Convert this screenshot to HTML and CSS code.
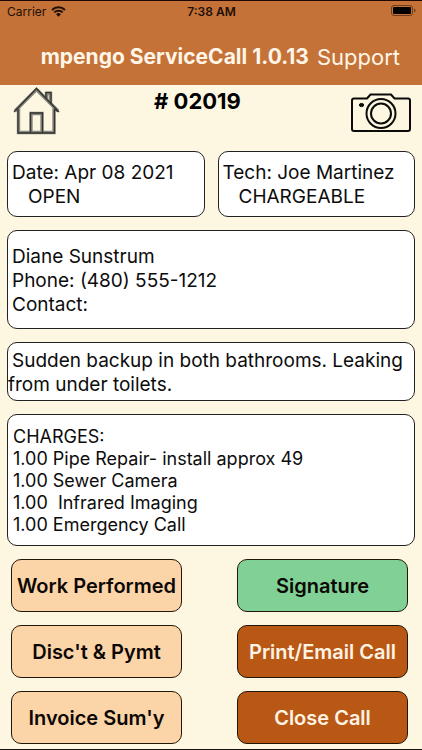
FILE: index.html
```html
<!DOCTYPE html>
<html lang="en">
<head>
<meta charset="utf-8">
<meta name="viewport" content="width=device-width, initial-scale=1">
<title>mpengo ServiceCall</title>
<link rel="stylesheet" href="styles.css">
</head>
<body>
<div class="app">
  <header class="header">
    <div class="status">
      <div class="status-carrier">
        <span>Carrier</span>
        <svg class="wifi" viewBox="0 0 15 11" aria-hidden="true">
          <path d="M1 4a9.2 9.2 0 0 1 13 0M3.3 6.4a6 6 0 0 1 8.4 0" fill="none" stroke="currentColor" stroke-width="2"/>
          <path d="M5.1 8.2a3.4 3.4 0 0 1 4.8 0L7.5 10.8z" fill="currentColor"/>
        </svg>
      </div>
      <span class="status-time">7:38 AM</span>
      <svg class="battery" viewBox="0 0 25 12" aria-hidden="true">
        <rect x="0.5" y="0.5" width="21" height="10" rx="2.5" fill="none" stroke="#6f3d1c"/>
        <rect x="2" y="2" width="18" height="7" rx="1" fill="#000"/>
        <path d="M23 3.6q1.500.4 1.500 1.900t-1.500 1.900z" fill="#6f3d1c"/>
      </svg>
    </div>
    <nav class="navbar">
      <h1 class="title">mpengo ServiceCall 1.0.13</h1>
      <a class="support" href="#support">Support</a>
    </nav>
  </header>
  <main class="main">
    <div class="toolbar">
      <button class="icon-button" type="button" aria-label="Home">
        <svg class="home" viewBox="0 0 48 48" fill="none" aria-hidden="true">
          <g stroke="#888880" stroke-width="3.400">
            <path d="M6.500 21V45.500H42V21M19 45V26.500H30V45M34.500 12V6.500H38.500V17"/>
            <path d="M3 24L24.500 2.500L46 24"/>
          </g>
          <g stroke="#33332f" stroke-width="1.300">
            <path d="M6 22V46H42.500V22M18.500 46V26H30.500V46M34 11V5.500H39V17"/>
            <path d="M2 25L24.500 1.500L47 25L43 22.500"/>
          </g>
        </svg>
      </button>
      <h2 class="call-number"># 02019</h2>
      <button class="icon-button icon-button-end" type="button" aria-label="Camera">
        <svg class="camera" viewBox="0 0 60 40" fill="none" stroke="#0b0b0a" stroke-width="2" aria-hidden="true">
          <path d="M3 5.500H16L19.500 1.500H40L43.500 5.500H57Q59 5.500 59 7.500V36Q59 38 57 38H3Q1 38 1 36V7.500Q1 5.500 3 5.500Z"/>
          <circle cx="30" cy="20.500" r="14.500"/>
          <circle cx="30" cy="20.500" r="10"/>
          <ellipse cx="10.500" cy="12" rx="2.200" ry="1.600" fill="#0b0b0a" stroke-width="1"/>
        </svg>
      </button>
    </div>
    <div class="pair">
      <section class="card card-short"><p>Date: Apr 08 2021</p><p class="indent">OPEN</p></section>
      <section class="card card-short"><p>Tech: Joe Martinez</p><p class="indent">CHARGEABLE</p></section>
    </div>
    <section class="card card-customer"><p>Diane Sunstrum</p><p>Phone: (480) 555-1212</p><p>Contact:</p></section>
    <section class="card card-problem"><p>Sudden backup in both bathrooms. Leaking from under toilets.</p></section>
    <section class="card card-charges"><p>CHARGES:</p><p>1.00 Pipe Repair- install approx 49</p><p>1.00 Sewer Camera</p><p>1.00&nbsp; Infrared Imaging</p><p>1.00 Emergency Call</p></section>
    <div class="actions">
      <button class="action action-light" type="button">Work Performed</button>
      <button class="action action-green" type="button">Signature</button>
      <button class="action action-light" type="button">Disc't &amp; Pymt</button>
      <button class="action action-dark" type="button">Print/Email Call</button>
      <button class="action action-light" type="button">Invoice Sum'y</button>
      <button class="action action-dark" type="button">Close Call</button>
    </div>
  </main>
</div>
</body>
</html>
```
FILE: styles.css
```css
* {
  box-sizing: border-box;
}

body {
  margin: 0;
  background: #fdf7e1;
  color: #0c0c0c;
  font-family: Inter, "Liberation Sans", sans-serif;
}

h1,
h2,
p {
  margin: 0;
}

.app {
  min-height: 100vh;
  border-top: 1px solid #200808;
  border-bottom: 1px solid #151515;
}

.header {
  background: #c47238;
}

.status {
  display: grid;
  grid-template-columns: 1fr auto 1fr;
  align-items: center;
  height: 20px;
  padding: 0 6px 0 7px;
  color: #1c0f07;
  font-size: 12px;
}

.status-carrier {
  display: flex;
  align-items: center;
  gap: 5px;
}

.status-time {
  font-weight: 600;
}

.wifi {
  width: 15px;
  height: 11px;
}

.battery {
  width: 25px;
  height: 12px;
  justify-self: end;
}

.navbar {
  display: flex;
  align-items: center;
  justify-content: flex-end;
  gap: 8px;
  height: 64px;
  padding: 7px 22px 0 16px;
  color: #fff6e8;
}

.title {
  font-size: 21px;
  font-weight: 700;
  line-height: 28px;
  white-space: nowrap;
}

.support {
  color: inherit;
  font-size: 22px;
  line-height: 28px;
  text-decoration: none;
}

.main {
  display: flex;
  flex-direction: column;
  gap: 13px;
  padding: 2px 7px 5px;
}

.toolbar {
  display: grid;
  grid-template-columns: 48px 1fr 76px;
  height: 51px;
  padding: 0 4px 0 5px;
}

.icon-button {
  display: flex;
  padding: 0;
  border: 0;
  background: none;
}

.icon-button-end {
  justify-content: flex-end;
}

.home {
  width: 48px;
  height: 48px;
}

.camera {
  width: 60px;
  height: 40px;
  margin-top: 6px;
}

.call-number {
  color: #000;
  font-size: 22px;
  font-weight: 700;
  line-height: 28px;
  text-align: center;
}

.pair {
  display: grid;
  grid-template-columns: 1fr 1fr;
  gap: 13px;
}

.card {
  display: flex;
  flex-direction: column;
  justify-content: center;
  padding: 2px 4px 0;
  border: 1px solid #222;
  border-radius: 10px;
  background: #fff;
  font-size: 19px;
  line-height: 24px;
}

.card-short {
  min-height: 66px;
  white-space: nowrap;
}

.card-customer {
  min-height: 99px;
}

.card-problem {
  min-height: 59px;
  padding: 2px 0 0;
  text-indent: 4px;
}

.card-charges {
  min-height: 132px;
  padding: 2px 5px 0;
  font-size: 18px;
  line-height: 22px;
}

.indent {
  padding-left: 16px;
}

.actions {
  display: grid;
  grid-template-columns: 1fr 1fr;
  gap: 13px 55px;
  padding: 0 7px 0 4px;
}

.action {
  height: 53px;
  padding: 0;
  border: 1px solid #221608;
  border-radius: 10px;
  color: #0c0805;
  font: 600 20px Inter, "Liberation Sans", sans-serif;
  white-space: nowrap;
}

.action-light {
  background: #fbd4a8;
}

.action-green {
  background: #81d197;
}

.action-dark {
  background: #b95815;
  color: #fff3e4;
}
```
